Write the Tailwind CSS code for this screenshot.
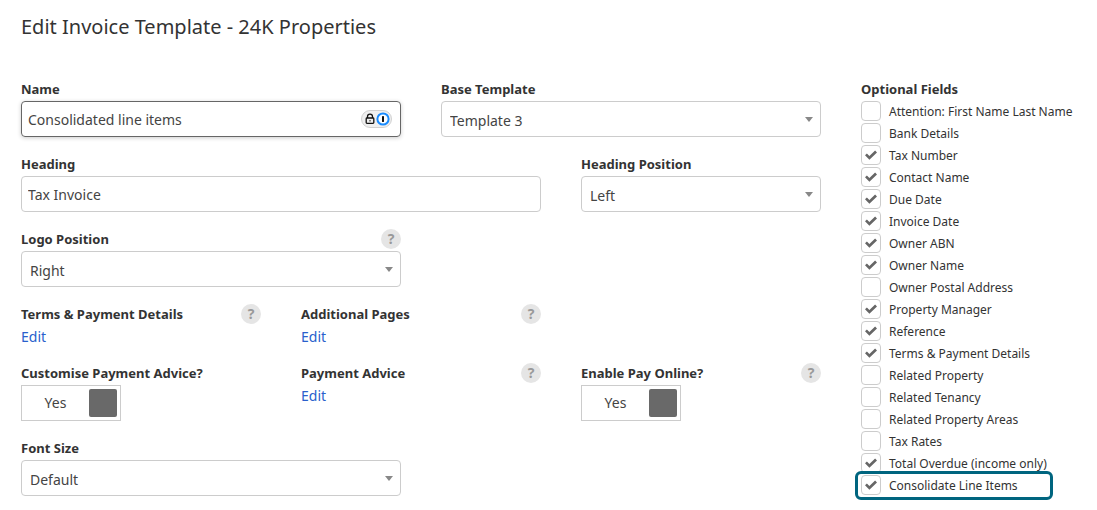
<!DOCTYPE html>
<html lang="en">
<head>
  <meta charset="UTF-8" />
  <meta name="viewport" content="width=device-width, initial-scale=1.0"/>
  <title>Edit Invoice Template</title>
  <script src="https://cdn.jsdelivr.net/npm/@tailwindcss/browser@4"></script>
</head>
<body class="bg-white min-h-screen text-[#333] font-['Segoe_UI','Noto_Sans','Open_Sans',sans-serif]">

<main class="px-[21px] pt-3 pb-3.5">
  <h1 class="text-[20px] leading-[30px]">Edit Invoice Template - 24K Properties</h1>

  <form class="flex items-start gap-10 mt-[37px]">

    <!-- Template settings -->
    <div class="flex-1 grid grid-cols-6 gap-x-10 gap-y-[17px]">

      <div class="col-span-3">
        <label for="name" class="block h-[22px] text-[13px] leading-5 font-bold">Name</label>
        <div class="relative">
          <input id="name" type="text" value="Consolidated line items" class="block w-full h-9 pl-[6px] pr-12 rounded border border-[#666] shadow-[0_1px_4px_rgba(0,0,0,0.2)] text-sm text-[#444] outline-none" />
          <!-- Password manager badge -->
          <svg class="absolute right-[9px] top-[9px] w-[31px] h-[18px]" viewBox="0 0 31 18" aria-hidden="true">
            <rect x="0.5" y="0.5" width="30" height="17" rx="8.5" fill="#efefef" stroke="#d0d0d0"/>
            <path d="M6.5 8V6.6a2.5 2.5 0 0 1 5 0V8" fill="none" stroke="#111" stroke-width="1.3"/>
            <rect x="5.2" y="8" width="7.6" height="5.4" rx="0.8" fill="#efefef" stroke="#111" stroke-width="1.3"/>
            <rect x="8.4" y="10.2" width="1.2" height="1.2" fill="#111"/>
            <circle cx="22" cy="9" r="5.6" fill="#fff" stroke="#1a8cff" stroke-width="2"/>
            <rect x="21" y="6" width="2" height="6" rx="0.4" fill="#111"/>
          </svg>
        </div>
      </div>

      <div class="col-span-3">
        <label for="base" class="block h-[22px] text-[13px] leading-5 font-bold">Base Template</label>
        <div class="relative">
          <select id="base" class="block w-full h-9 pl-2 pt-1 appearance-none rounded border border-[#ccc] bg-white text-sm text-[#444]"><option>Template 3</option></select>
          <svg class="absolute right-2 top-4 w-2 h-[5px] pointer-events-none" viewBox="0 0 8 5"><path d="M0 0h8L4 5z" fill="#888"/></svg>
        </div>
      </div>

      <div class="col-span-4">
        <label for="heading" class="block h-[22px] text-[13px] leading-5 font-bold">Heading</label>
        <input id="heading" type="text" value="Tax Invoice" class="block w-full h-9 px-[6px] rounded border border-[#ccc] text-sm text-[#444]" />
      </div>

      <div class="col-span-2">
        <label for="heading-position" class="block h-[22px] text-[13px] leading-5 font-bold">Heading Position</label>
        <div class="relative">
          <select id="heading-position" class="block w-full h-9 pl-2 pt-1 appearance-none rounded border border-[#ccc] bg-white text-sm text-[#444]"><option>Left</option></select>
          <svg class="absolute right-2 top-4 w-2 h-[5px] pointer-events-none" viewBox="0 0 8 5"><path d="M0 0h8L4 5z" fill="#888"/></svg>
        </div>
      </div>

      <div class="col-span-3">
        <div class="flex justify-between h-[22px]">
          <label for="logo-position" class="text-[13px] leading-5 font-bold">Logo Position</label>
          <button type="button" class="size-5 rounded-full bg-[#e5e5e5] text-sm leading-5 font-bold text-[#999]">?</button>
        </div>
        <div class="relative">
          <select id="logo-position" class="block w-full h-9 pl-2 pt-1 appearance-none rounded border border-[#ccc] bg-white text-sm text-[#444]"><option>Right</option></select>
          <svg class="absolute right-2 top-4 w-2 h-[5px] pointer-events-none" viewBox="0 0 8 5"><path d="M0 0h8L4 5z" fill="#888"/></svg>
        </div>
      </div>

      <div class="col-span-2 col-start-1">
        <div class="flex justify-between h-[22px]">
          <h2 class="text-[13px] leading-5 font-bold">Terms &amp; Payment Details</h2>
          <button type="button" class="size-5 rounded-full bg-[#e5e5e5] text-sm leading-5 font-bold text-[#999]">?</button>
        </div>
        <a href="#" class="block w-fit h-5 text-sm leading-[22px] text-[#2a5fcc]">Edit</a>
      </div>

      <div class="col-span-2">
        <div class="flex justify-between h-[22px]">
          <h2 class="text-[13px] leading-5 font-bold">Additional Pages</h2>
          <button type="button" class="size-5 rounded-full bg-[#e5e5e5] text-sm leading-5 font-bold text-[#999]">?</button>
        </div>
        <a href="#" class="block w-fit h-5 text-sm leading-[22px] text-[#2a5fcc]">Edit</a>
      </div>

      <div class="col-span-2 col-start-1">
        <label for="customise" class="block h-[22px] text-[13px] leading-5 font-bold">Customise Payment Advice?</label>
        <button id="customise" type="button" role="switch" aria-checked="true" class="flex items-center w-[100px] h-9 pr-[3px] border border-[#ccc] text-sm text-[#444]">
          <span class="flex-1">Yes</span>
          <span class="size-7 rounded-xs bg-[#696969]"></span>
        </button>
      </div>

      <div class="col-span-2">
        <div class="flex justify-between h-[22px]">
          <h2 class="text-[13px] leading-5 font-bold">Payment Advice</h2>
          <button type="button" class="size-5 rounded-full bg-[#e5e5e5] text-sm leading-5 font-bold text-[#999]">?</button>
        </div>
        <a href="#" class="block w-fit h-5 text-sm leading-[22px] text-[#2a5fcc]">Edit</a>
      </div>

      <div class="col-span-2">
        <div class="flex justify-between h-[22px]">
          <label for="pay-online" class="text-[13px] leading-5 font-bold">Enable Pay Online?</label>
          <button type="button" class="size-5 rounded-full bg-[#e5e5e5] text-sm leading-5 font-bold text-[#999]">?</button>
        </div>
        <button id="pay-online" type="button" role="switch" aria-checked="true" class="flex items-center w-[100px] h-9 pr-[3px] border border-[#ccc] text-sm text-[#444]">
          <span class="flex-1">Yes</span>
          <span class="size-7 rounded-xs bg-[#696969]"></span>
        </button>
      </div>

      <div class="col-span-3">
        <label for="font-size" class="block h-[22px] text-[13px] leading-5 font-bold">Font Size</label>
        <div class="relative">
          <select id="font-size" class="block w-full h-9 pl-2 pt-1 appearance-none rounded border border-[#ccc] bg-white text-sm text-[#444]"><option>Default</option></select>
          <svg class="absolute right-2 top-4 w-2 h-[5px] pointer-events-none" viewBox="0 0 8 5"><path d="M0 0h8L4 5z" fill="#888"/></svg>
        </div>
      </div>
    </div>

    <!-- Optional fields -->
    <fieldset class="w-[215px] shrink-0">
      <legend class="h-[22px] text-[13px] leading-5 font-bold">Optional Fields</legend>
      <div id="optional" class="flex flex-col gap-[2px]"></div>
    </fieldset>

  </form>
</main>

<script>
  const fields = [
    ['Attention: First Name Last Name', false],
    ['Bank Details', false],
    ['Tax Number', true],
    ['Contact Name', true],
    ['Due Date', true],
    ['Invoice Date', true],
    ['Owner ABN', true],
    ['Owner Name', true],
    ['Owner Postal Address', false],
    ['Property Manager', true],
    ['Reference', true],
    ['Terms & Payment Details', true],
    ['Related Property', false],
    ['Related Tenancy', false],
    ['Related Property Areas', false],
    ['Tax Rates', false],
    ['Total Overdue (income only)', true],
    ['Consolidate Line Items', true]
  ];

  const list = document.getElementById('optional');
  fields.forEach(([text, checked], i) => {
    // The last field gets the teal outline
    const ring = i === fields.length - 1
      ? '<span class="absolute -left-[6px] -top-1 w-[198px] h-[29px] rounded-md border-3 border-[#00657f] pointer-events-none"></span>'
      : '';
    list.insertAdjacentHTML('beforeend', `
      <label class="relative flex items-center gap-2 h-5 text-[12px] whitespace-nowrap">
        <span class="grid size-5">
          <input type="checkbox" ${checked ? 'checked' : ''} class="peer col-start-1 row-start-1 size-5 appearance-none rounded border border-[#ccc] bg-white" />
          <svg class="col-start-1 row-start-1 place-self-center size-3 invisible peer-checked:visible pointer-events-none" viewBox="0 0 12 12"><path d="M0 6.3 1.9 4.4 4.4 6.9 10.1 1.6 12 3.5 4.4 10.7z" fill="#666"/></svg>
        </span>
        <span class="leading-5 pt-[2px]">${text.replace('&', '&amp;')}</span>${ring}
      </label>`);
  });
</script>

</body>
</html>
